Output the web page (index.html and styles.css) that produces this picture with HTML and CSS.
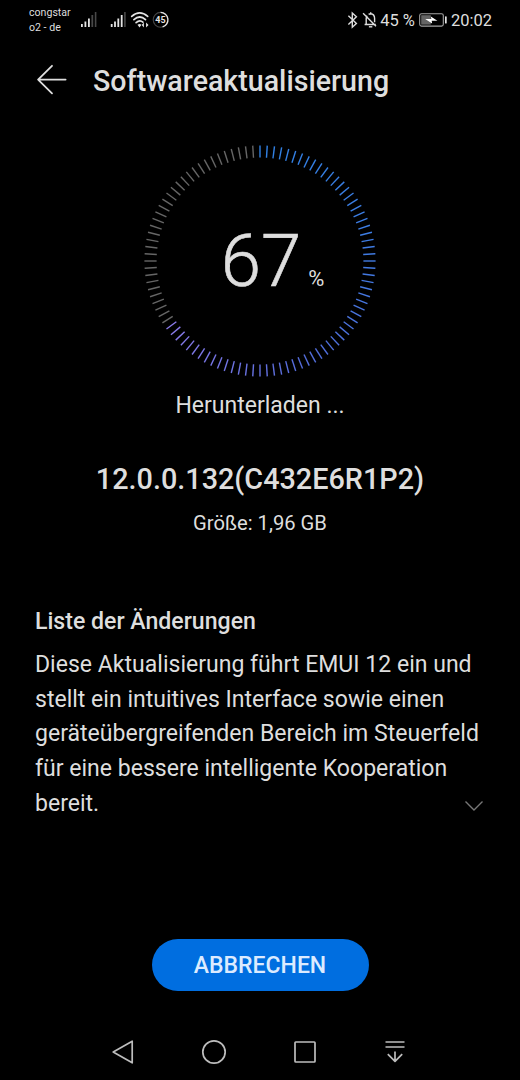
FILE: index.html
```
<!DOCTYPE html>
<html lang="de">
<head>
    <meta charset="UTF-8">
    <meta name="viewport" content="width=device-width, initial-scale=1.0">
    <title>Softwareaktualisierung</title>
    <link rel="stylesheet" href="styles.css">
</head>
<body>
    <div class="screen">
        <div class="statusbar">
            <div class="carrier">
                <span>congstar</span>
                <span>o2 - de</span>
            </div>
            <svg class="signals" width="100" height="24" viewBox="0 0 100 24" fill="none">
                <g fill="#e4e4e4">
                    <rect x="1" y="16" width="1.8" height="3"/>
                    <rect x="4.5" y="13.5" width="1.8" height="5.5"/>
                    <rect x="8" y="10.5" width="1.8" height="8.5"/>
                    <rect x="30.8" y="16" width="1.8" height="3"/>
                    <rect x="34.1" y="13.5" width="1.8" height="5.5"/>
                    <rect x="37.4" y="10.5" width="1.8" height="8.5"/>
                    <rect x="40.8" y="7" width="1.8" height="12"/>
                </g>
                <g fill="#484848">
                    <rect x="11.4" y="7" width="1.8" height="12"/>
                    <rect x="14.8" y="4" width="1.6" height="15"/>
                    <rect x="44.1" y="4" width="1.6" height="15"/>
                </g>
                <g stroke="#e4e4e4" stroke-width="1.7" stroke-linecap="round">
                    <path d="M51.7 8.4Q59.7 1.4 67.7 8.4"/>
                    <path d="M53.9 11.6Q59.7 6.4 65.5 11.6"/>
                    <path d="M56.1 14.7Q59.7 11.4 62.9 14.2"/>
                </g>
                <path fill="#e4e4e4" d="M57.5 16.8q2.2-1.8 4 0L59.5 19.4zM61.7 17l2.2-2.6v5.2zM68.5 17l-2.4-2.6v5.2z"/>
                <circle cx="80.6" cy="11.8" r="7.4" stroke="#444" stroke-width="1.1"/>
                <path d="M80.6 4.4A7.4 7.4 0 0 1 82.6 18.9" stroke="#e4e4e4" stroke-width="1.3"/>
                <text class="badge-text" x="80.4" y="15.2" text-anchor="middle">45</text>
            </svg>
            <div class="status-right">
                <svg width="32" height="20" viewBox="0 0 32 20" fill="none" stroke="#dedede" stroke-width="1.4">
                    <path d="M1.4 5.8L9.4 13.4 5.3 17.2V3L9.4 6.8 1.4 14.4"/>
                    <path d="M17.6 14.5h11.2M19.2 14V8.6q0-1.7 1-2.9M21.6 4.4q1-.7 2.1-.7 3.9.3 3.9 4.9v3.6M23.7 2.2v1.5M16.1 3.2L29 16.2"/>
                    <path d="M21.9 16.8h3.4"/>
                </svg>
                <span class="percent">45 %</span>
                <svg class="battery" width="28" height="14" viewBox="0 0 28 14" fill="none">
                    <rect x=".7" y=".7" width="23.6" height="12.4" rx="1.8" stroke="#a5a5a5" stroke-width="1.1"/>
                    <rect x="2.2" y="2.2" width="9.6" height="9.4" fill="#656565"/>
                    <path d="M6.2 6.1L12.3 6.1 11.8 3.4 18.4 7.7 12.7 7.7 13.1 10.5z" fill="#fff"/>
                    <rect x="26" y="3.2" width="1.7" height="7.4" rx=".7" fill="#e4e4e4"/>
                </svg>
                <span class="time">20:02</span>
            </div>
        </div>

        <header class="header">
            <svg width="32" height="32" viewBox="0 0 32 32" fill="none" stroke="#dedede" stroke-width="1.8" stroke-linecap="round" stroke-linejoin="round">
                <path d="M16 1.8L2.1 15.6 16 29.4M2.1 15.6H29.6"/>
            </svg>
            <h1>Softwareaktualisierung</h1>
        </header>

        <main>
            <div class="progress">
                <svg class="ring" id="ring" viewBox="0 0 240 240"></svg>
                <div class="value"><span class="number">67</span><span class="unit">%</span></div>
            </div>
            <p class="state">Herunterladen ...</p>
            <h2>12.0.0.132(C432E6R1P2)</h2>
            <p class="size">Größe: 1,96 GB</p>

            <section class="changes">
                <h3>Liste der Änderungen</h3>
                <p>Diese Aktualisierung führt EMUI 12 ein und<br>stellt ein intuitives Interface sowie einen<br>geräteübergreifenden Bereich im Steuerfeld<br>für eine bessere intelligente Kooperation<br>bereit.</p>
                <svg class="chevron" width="20" height="12" viewBox="0 0 20 12" fill="none" stroke="#777" stroke-width="1.4">
                    <path d="M1.5 1.5L10 10 18.5 1.5"/>
                </svg>
            </section>
        </main>

        <button class="btn" type="button">ABBRECHEN</button>

        <nav class="navbar">
            <svg width="24" height="26" viewBox="0 0 24 26"><path d="M2.2 13L21.2 2.2V23.8z"/></svg>
            <svg width="26" height="26" viewBox="0 0 26 26"><circle cx="13" cy="13" r="11.2"/></svg>
            <svg width="24" height="26" viewBox="0 0 24 26"><rect x="1" y="3" width="20" height="20" rx=".8"/></svg>
            <svg width="22" height="26" viewBox="0 0 22 26"><path d="M1.5 3h19M1.5 8h19M11 12.4v10M3.8 15.2L11 22.4 18.2 15.2"/></svg>
        </nav>
    </div>

    <script>
        const ring = document.getElementById('ring');
        const total = 100;
        const filled = 66;
        const stops = [[48, 128, 226], [62, 125, 228], [84, 108, 218], [142, 124, 236]];

        // Farbe entlang des Fortschritts
        function farbe(i) {
            const t = i / filled * (stops.length - 1);
            const n = Math.floor(t);
            const a = stops[n];
            const b = stops[n + 1];
            return 'rgb(' + a.map((v, k) => Math.round(v + (b[k] - v) * (t - n))).join(',') + ')';
        }

        for (let i = 0; i < total; i++) {
            const line = document.createElementNS('http://www.w3.org/2000/svg', 'line');
            line.setAttribute('x1', 120);
            line.setAttribute('x2', 120);
            line.setAttribute('y1', 4.4);
            line.setAttribute('y2', 16.6);
            line.setAttribute('stroke', i < filled ? farbe(i) : '#666');
            line.setAttribute('transform', `rotate(${i * 360 / total} 120 120)`);
            ring.appendChild(line);
        }
    </script>
</body>
</html>
```
FILE: styles.css
```
* {
    margin: 0;
    padding: 0;
    box-sizing: border-box;
}

body {
    font-family: Roboto, sans-serif;
    background: #000;
    color: #dedede;
}

.screen {
    width: 520px;
    height: 1080px;
    display: flex;
    flex-direction: column;
    align-items: center;
    overflow: hidden;
}

.statusbar {
    width: 100%;
    height: 40px;
    display: flex;
    align-items: flex-start;
    padding: 5px 28px 0 29px;
}

.carrier {
    width: 51px;
    display: flex;
    flex-direction: column;
    font-size: 10.6px;
    line-height: 15px;
    white-space: nowrap;
}

.signals {
    margin-top: 3px;
}

.badge-text {
    font-size: 9px;
    font-weight: bold;
    fill: #e4e4e4;
}

.status-right {
    margin-left: auto;
    height: 30px;
    display: flex;
    align-items: center;
    font-size: 16.5px;
}

.percent {
    margin-left: 1px;
}

.battery {
    margin: 0 4px;
}

.header {
    width: 100%;
    height: 80px;
    display: flex;
    align-items: center;
    padding-left: 36px;
    gap: 25px;
}

h1 {
    font-size: 28.6px;
    font-weight: 500;
    padding-top: 2px;
}

main {
    width: 100%;
    text-align: center;
}

.progress {
    display: grid;
    place-items: center;
    height: 240px;
    margin-top: 21px;
}

.ring {
    grid-area: 1 / 1;
    width: 240px;
    height: 240px;
    stroke-width: 1.4;
}

.value {
    grid-area: 1 / 1;
    display: flex;
    align-items: baseline;
    padding-left: 25px;
}

.number {
    font-size: 72.5px;
    font-weight: 300;
    line-height: 85px;
    -webkit-text-stroke: 0.6px #dedede;
}

.unit {
    font-size: 22px;
    margin-left: 7px;
}

.state {
    font-size: 23px;
    line-height: 30px;
    margin-top: 10px;
}

h2 {
    font-size: 28.8px;
    font-weight: 500;
    line-height: 36px;
    margin-top: 40px;
}

.size {
    font-size: 20.2px;
    line-height: 26px;
    margin-top: 13px;
}

.changes {
    display: grid;
    text-align: left;
    margin-top: 71px;
    padding: 0 36px 0 35px;
}

h3 {
    font-size: 23.1px;
    font-weight: 500;
    line-height: 30px;
}

.changes p {
    grid-area: 2 / 1;
    font-size: 23.05px;
    line-height: 34.7px;
    margin-top: 11px;
}

.chevron {
    grid-area: 2 / 1;
    place-self: end;
    margin-bottom: 10px;
}

.btn {
    width: 217px;
    height: 52px;
    margin-top: 117px;
    padding-top: 2px;
    border: none;
    border-radius: 26px;
    background: #006ee0;
    color: #dcebff;
    font-family: inherit;
    font-size: 23px;
    font-weight: 500;
}

.navbar {
    width: 296px;
    margin-top: 48px;
    margin-right: 3px;
    display: flex;
    justify-content: space-between;
    fill: none;
    stroke: #bdbdbd;
    stroke-width: 1.7;
    stroke-linejoin: round;
}
```
